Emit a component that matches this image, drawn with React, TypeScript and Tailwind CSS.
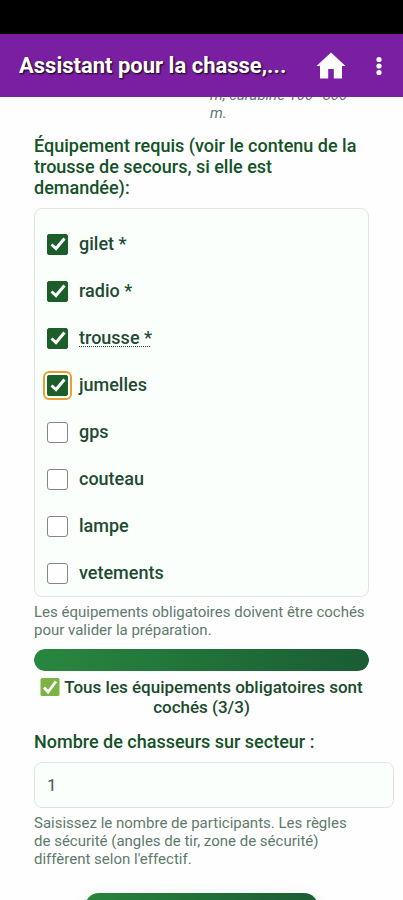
import { useState } from 'react';

type Item = { id: string; required?: boolean; hint?: boolean; focused?: boolean; checked?: boolean };

const initialItems: Item[] = [
  { id: 'gilet', required: true, checked: true },
  { id: 'radio', required: true, checked: true },
  { id: 'trousse', required: true, checked: true, hint: true },
  { id: 'jumelles', checked: true, focused: true },
  { id: 'gps' },
  { id: 'couteau' },
  { id: 'lampe' },
  { id: 'vetements' },
];

function TopBar() {
  return (
    <header className="flex h-[63px] shrink-0 items-center bg-[#7b1fa2] pr-2 pl-[19px] text-white">
      <h1 className="min-w-0 flex-1 text-[22px] leading-7 font-bold whitespace-nowrap [text-shadow:1px_1px_2px_#000]">
        Assistant pour la chasse,...
      </h1>
      <button type="button" aria-label="Accueil" className="mr-[14px] flex h-9 w-9 items-center justify-center">
        <svg viewBox="0 0 30 28" className="h-7 w-[30px]" fill="currentColor" aria-hidden="true">
          <path d="M15 0.500 29.500 14 26 14 26 26.500 17.800 26.500 17.800 17 12.200 17 12.200 26.500 4 26.500 4 14 0.500 14Z" />
        </svg>
      </button>
      <button type="button" aria-label="Menu" className="flex h-9 w-8 items-center justify-center">
        <svg viewBox="0 0 6 20" className="h-5 w-[6px]" fill="currentColor" aria-hidden="true">
          <circle cx="3" cy="3.500" r="2.600" />
          <circle cx="3" cy="10" r="2.600" />
          <circle cx="3" cy="16.500" r="2.600" />
        </svg>
      </button>
    </header>
  );
}

function EquipmentRow({ item, onToggle }: { item: Item; onToggle: () => void }) {
  return (
    <label className="flex h-[47px] cursor-pointer items-center gap-3">
      <span className="grid h-5 w-5 shrink-0 place-items-center">
        <input
          type="checkbox"
          checked={!!item.checked}
          onChange={onToggle}
          className={`peer col-start-1 row-start-1 h-[21px] w-[21px] appearance-none rounded-[3px] border border-[#858585] bg-white checked:rounded-[2px] checked:border-[#1b5e2a] checked:bg-[#1b5e2a] ${
            item.focused ? 'outline-2 outline-offset-2 outline-[#e8a034]' : ''
          }`}
        />
        <svg
          viewBox="0 0 20 20"
          className="pointer-events-none col-start-1 row-start-1 hidden h-5 w-5 peer-checked:block"
          fill="none"
          stroke="#fff"
          strokeWidth="3"
          aria-hidden="true"
        >
          <path d="M3.500 10.500 8 14.500 16.500 4.500" />
        </svg>
      </span>
      <span
        className={`text-[18px] leading-[21px] font-medium text-[#1f4a33] ${
          item.hint ? 'underline decoration-dotted decoration-1 underline-offset-2 [text-decoration-skip-ink:none]' : ''
        }`}
      >
        {item.required ? `${item.id} *` : item.id}
      </span>
    </label>
  );
}

export default function App() {
  const [items, setItems] = useState(initialItems);
  const [hunters, setHunters] = useState('1');
  const required = items.filter((i) => i.required);
  const done = required.filter((i) => i.checked).length;

  return (
    <div className="flex h-screen flex-col overflow-hidden bg-[#fdfefd] font-['Roboto','Noto_Sans',sans-serif]">
      <div className="h-[34px] shrink-0 bg-black" />
      <TopBar />
      <main className="min-h-0 flex-1 overflow-hidden px-[34px]">
        <p className="-mt-[11px] ml-auto w-[159px] pr-4 text-[15px] leading-[18px] text-[#5f7a6c] italic">
          m, carabine 100–300 m.
        </p>
        <h2 className="mt-[13px] text-[18px] leading-[21px] font-medium text-[#145228]">
          Équipement requis (voir le contenu de la trousse de secours, si elle est demandée):
        </h2>
        <div className="mt-[10px] rounded-lg border border-[#dfe6e0] bg-[#fbfffc] px-3 pt-[11px]">
          {items.map((item) => (
            <EquipmentRow
              key={item.id}
              item={item}
              onToggle={() =>
                setItems(items.map((i) => (i.id === item.id ? { ...i, checked: !i.checked } : i)))
              }
            />
          ))}
        </div>
        <p className="mt-[6px] text-[15px] leading-[18px] text-[#5f7a6c]">
          Les équipements obligatoires doivent être cochés pour valider la préparation.
        </p>
        <div className="mt-[10px] h-[22px] overflow-hidden rounded-full bg-[#e3ebe4]">
          <div
            className="h-full rounded-full bg-linear-to-r from-[#28883f] to-[#1b5c34]"
            style={{ width: `${(done / required.length) * 100}%` }}
          />
        </div>
        <p className="mt-[6px] text-center text-[17px] leading-5 font-medium text-[#1a4a2c]">
          <svg viewBox="0 0 20 20" className="mr-1 inline-block h-5 w-5 align-[-4px]" aria-hidden="true">
            <rect x="0.500" y="1" width="19" height="18" rx="1.500" fill="#7cb342" />
            <path d="M4 10.500 8 15 16 4.500" fill="none" stroke="#fff" strokeWidth="2.800" />
          </svg>
          {`Tous les équipements obligatoires sont cochés (${done}/${required.length})`}
        </p>
        <label htmlFor="hunters" className="mt-[14px] block text-[18px] leading-[21px] font-medium text-[#145228]">
          Nombre de chasseurs sur secteur :
        </label>
        <div className="mt-[10px] -mr-[25px]">
          <input
            id="hunters"
            type="text"
            inputMode="numeric"
            value={hunters}
            onChange={(e) => setHunters(e.target.value)}
            className="block h-[46px] w-full rounded-lg border border-[#dce5de] bg-[#fbfffc] px-3 text-[17px] text-[#555]"
          />
        </div>
        <p className="mt-[6px] pr-3 text-[15px] leading-[18px] text-[#5f7a6c]">
          Saisissez le nombre de participants. Les règles de sécurité (angles de tir, zone de sécurité) diffèrent selon
          l'effectif.
        </p>
        <button
          type="button"
          aria-label="Valider"
          className="mx-auto mt-[25px] block h-12 w-[233px] rounded-[14px] bg-linear-to-r from-[#28843c] to-[#1b5c34] shadow-[0_4px_14px_rgba(0,0,0,0.12)]"
        />
      </main>
    </div>
  );
}
